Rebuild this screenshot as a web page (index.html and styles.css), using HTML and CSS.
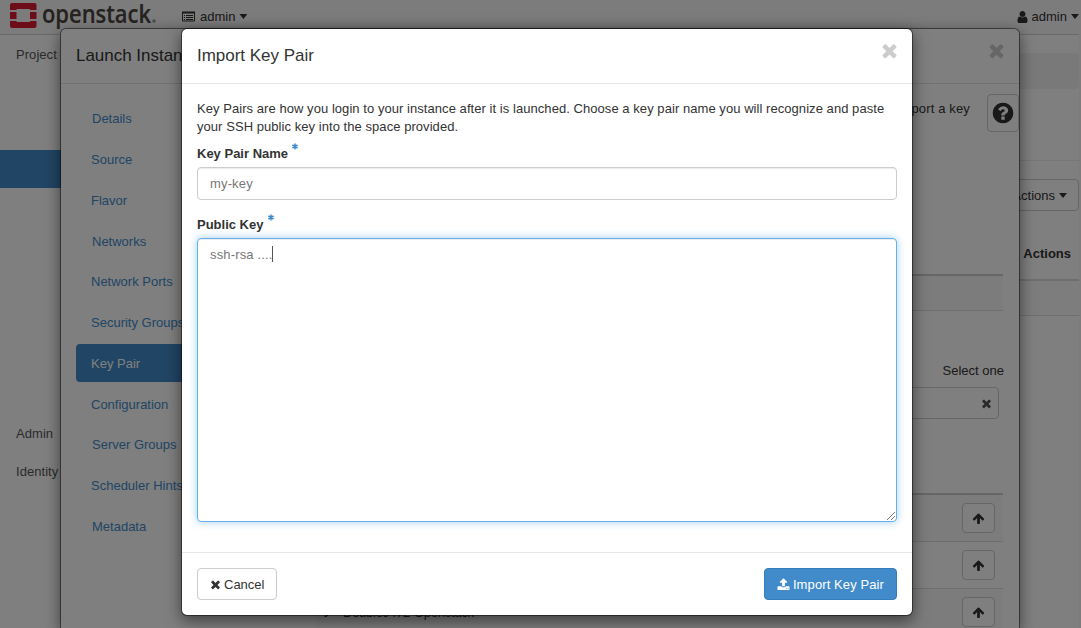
FILE: index.html
```html
<!DOCTYPE html>
<html lang="en">
<head>
<meta charset="utf-8">
<title>Import Key Pair</title>
<link rel="stylesheet" href="styles.css">
</head>
<body>
<svg class="defs" width="0" height="0">
  <symbol id="times" viewBox="0 0 1792 1792"><path d="M1490 1322q0 40-28 68l-136 136q-28 28-68 28t-68-28l-294-294-294 294q-28 28-68 28t-68-28l-136-136q-28-28-28-68t28-68l294-294-294-294q-28-28-28-68t28-68l136-136q28-28 68-28t68 28l294 294 294-294q28-28 68-28t68 28l136 136q28 28 28 68t-28 68l-294 294 294 294q28 28 28 68z"/></symbol>
  <symbol id="upload" viewBox="0 0 1792 1792"><path d="M1344 1472q0-26-19-45t-45-19-45 19-19 45 19 45 45 19 45-19 19-45zm256 0q0-26-19-45t-45-19-45 19-19 45 19 45 45 19 45-19 19-45zm128-224v320q0 40-28 68t-68 28h-1472q-40 0-68-28t-28-68v-320q0-40 28-68t68-28h427q21 56 70.500 92t110.500 36h256q61 0 110.500-36t70.500-92h427q40 0 68 28t28 68zm-325-648q-17 40-59 40h-256v448q0 26-19 45t-45 19h-256q-26 0-45-19t-19-45v-448h-256q-42 0-59-40-17-39 14-69l448-448q18-19 45-19t45 19l448 448q31 30 14 69z"/></symbol>
  <symbol id="user" viewBox="192 0 1408 1792"><path d="M1536 1399q0 109-62.500 187t-150.500 78h-854q-88 0-150.500-78t-62.500-187q0-85 8.500-160.500t31.500-152 58.500-131 94-89 134.500-34.500q131 128 313 128t313-128q76 0 134.500 34.500t94 89 58.500 131 31.500 152 8.500 160.500zm-256-887q0 159-112.500 271.500t-271.500 112.500-271.500-112.500-112.500-271.500 112.500-271.500 271.500-112.500 271.500 112.500 112.500 271.500z"/></symbol>
  <symbol id="help" viewBox="0 0 1792 1792"><path d="M1024 1376v-192q0-14-9-23t-23-9h-192q-14 0-23 9t-9 23v192q0 14 9 23t23 9h192q14 0 23-9t9-23zm256-672q0-88-55.500-163t-138.500-116-170-41q-243 0-371 213-15 24 8 42l132 100q7 6 19 6 16 0 25-12 53-68 86-92 34-24 86-24 48 0 85.500 26t37.500 59q0 38-20 61t-68 45q-63 28-115.500 86.500t-52.500 125.500v36q0 14 9 23t23 9h192q14 0 23-9t9-23q0-19 21.500-49.500t54.500-49.500q32-18 49-28.500t46-35 44.500-48 28-60.500 12.500-81zm384 192q0 209-103 385.500t-279.500 279.500-385.500 103-385.500-103-279.500-279.500-103-385.500 103-385.500 279.500-279.500 385.500-103 385.500 103 279.500 279.500 103 385.500z"/></symbol>
  <symbol id="up" viewBox="0 0 1792 1792"><path d="M1675 971q0 51-37 90l-75 75q-38 38-91 38-54 0-90-38l-294-293v704q0 52-37.500 84.500t-90.500 32.500h-128q-53 0-90.500-32.500t-37.500-84.500v-704l-294 293q-36 38-90 38t-90-38l-75-75q-38-38-38-90 0-53 38-91l651-651q35-37 90-37 54 0 91 37l651 651q37 39 37 91z"/></symbol>
  <symbol id="star" viewBox="0 0 6 6"><path d="M3 0v6M.4 1.500l5.200 3M5.600 1.500l-5.200 3" stroke="#428bca" stroke-width="1.500"/></symbol>
</svg>

<div class="page">
  <header class="topbar">
    <svg class="logo" width="150" height="34" viewBox="0 0 150 34">
      <g fill="#da1a32">
        <path d="M0 10V5q0-2 2-2h22.500q2 0 2 2v5h-6.500V9.500q0-.5-.5-.5H7q-.500 0-.500.500v.500z"/>
        <path d="M0 12h6.500v7H0zM20 12h6.500v7H20z"/>
        <path d="M0 21h6.500v.500q0 .500.500.500h12.500q.500 0 .500-.500V21h6.500v5q0 2-2 2H2q-2 0-2-2z"/>
      </g>
      <text class="wordmark" x="32" y="23" textLength="109" lengthAdjust="spacingAndGlyphs">openstack</text>
      <circle cx="144" cy="21" r="1.800" fill="#a09c9a"/>
    </svg>
    <div class="context">
      <svg width="13" height="11" viewBox="0 0 13 11"><path fill="none" stroke="#333" d="M.5 1.500h12v8.500H.5z"/><path stroke="#333" stroke-width="2" d="M0 1.500h13"/><path stroke="#333" d="M2 4.500h1M4 4.500h7M2 6.500h1M4 6.500h7M2 8.500h1M4 8.500h7"/></svg>
      <span>admin</span><i class="caret"></i>
    </div>
    <div class="account">
      <svg class="icon"><use href="#user"/></svg><span>admin</span><i class="caret"></i>
    </div>
  </header>
  <div class="columns">
    <nav class="sidebar">
      <a class="first">Project</a>
      <a class="active"></a>
      <a>Admin</a>
      <a>Identity</a>
    </nav>
    <main class="content">
      <div class="crumbs"></div>
      <hr class="rule">
      <div class="toolbar"><button class="btn">Actions<i class="caret"></i></button></div>
      <div class="thead">Actions</div>
      <div class="empty"></div>
    </main>
  </div>
</div>

<section class="modal launch">
  <header class="modal-head"><h2>Launch Instance</h2><svg class="close"><use href="#times"/></svg></header>
  <div class="launch-body">
    <nav class="steps">
      <a class="in">Details</a><a>Source</a><a>Flavor</a><a class="in">Networks</a><a>Network Ports</a><a>Security Groups</a><a class="active">Key Pair</a><a>Configuration</a><a class="in">Server Groups</a><a>Scheduler Hints</a><a class="in">Metadata</a>
    </nav>
    <div class="pane">
      <div class="intro"><p>import a key</p><button class="btn help"><svg><use href="#help"/></svg></button></div>
      <div class="allocated"></div>
      <p class="select">Select one</p>
      <div class="filter"><svg class="icon"><use href="#times"/></svg></div>
      <div class="rows">
        <div class="row odd"><button class="btn"><svg class="icon"><use href="#up"/></svg></button></div>
        <div class="row"><button class="btn"><svg class="icon"><use href="#up"/></svg></button></div>
        <div class="row odd"><svg class="chev" viewBox="0 0 8 10"><path d="M1 0l5 5-5 5" fill="none" stroke="#333" stroke-width="2"/></svg><span>DoubleJ472-Openstack</span><button class="btn"><svg class="icon"><use href="#up"/></svg></button></div>
      </div>
    </div>
  </div>
</section>

<div class="backdrop"></div>

<section class="modal import">
  <header class="modal-head"><h2>Import Key Pair</h2><svg class="close"><use href="#times"/></svg></header>
  <div class="import-body">
    <p class="lead">Key Pairs are how you login to your instance after it is launched. Choose a key pair name you will recognize and paste<br>your SSH public key into the space provided.</p>
    <div class="label"><span>Key Pair Name</span><svg class="star"><use href="#star"/></svg></div>
    <div class="field">my-key</div>
    <div class="label second"><span>Public Key</span><svg class="star"><use href="#star"/></svg></div>
    <div class="field area"><span>ssh-rsa ....</span><i class="cursor"></i>
      <svg class="grip" viewBox="0 0 8 8"><path d="M0 8L8 0M4 8l4-4" stroke="#555" stroke-width=".8" fill="none"/></svg>
    </div>
  </div>
  <footer class="modal-foot">
    <button class="btn"><svg class="icon"><use href="#times"/></svg><span>Cancel</span></button>
    <button class="btn primary"><svg class="icon"><use href="#upload"/></svg><span>Import Key Pair</span></button>
  </footer>
</section>
</body>
</html>
```
FILE: styles.css
```css
* { box-sizing: border-box; }
body { margin: 0; height: 628px; overflow: hidden; position: relative; background: #fff; color: #333; font: 13px/18px "Liberation Sans", Arial, sans-serif; }
p, h2 { margin: 0; }
svg { display: block; flex: none; }
.defs { position: absolute; }
.icon { width: 13px; height: 13px; fill: currentColor; }
.caret { width: 8px; height: 5px; background: currentColor; clip-path: polygon(0 0, 100% 0, 50% 100%); margin-left: 4px; }
.btn { display: flex; align-items: center; justify-content: center; font: inherit; color: #333; background: #fff; border: 1px solid #ccc; border-radius: 4px; height: 32px; padding: 0 12px; }

/* dashboard */
.page { height: 628px; padding-right: 2px; background: linear-gradient(to left, #f8f8f8 2px, #fff 2px); }
.topbar { height: 35px; display: flex; padding: 0 0 0 10px; background: #f8f8f8; border-bottom: 1px solid #d2d2d2; }
.wordmark { font: 600 25.500px "Open Sans", sans-serif; fill: #4b4440; stroke: #4b4440; stroke-width: .2px; }
.context { display: flex; align-items: center; margin-left: 22px; height: 33px; }
.context span { margin-left: 5px; }
.account { display: flex; align-items: center; margin-left: auto; height: 33px; }
.account .icon { width: 11px; height: 14px; }
.account span { margin-left: 4px; }
.columns { display: flex; }
.sidebar { width: 240px; display: flex; flex-direction: column; }
.sidebar a { height: 38px; padding: 10px 16px; color: #555; letter-spacing: .05px; }
.sidebar .first { padding-top: 11px; }
.sidebar .active { margin: 77px 0 227px; background: #428bca; }
.content { flex: 1; padding-top: 18px; }
.crumbs { height: 36px; background: #f3f3f3; border-radius: 4px; }
.rule { margin: 71px 0 18px; border: 0; border-top: 1px solid #eee; }
.toolbar { display: flex; justify-content: flex-end; }
.toolbar .btn { padding: 1px 11px 0 12px; }
.thead { height: 70px; padding: 34px 8px 0; border-bottom: 2px solid #ddd; font-weight: bold; text-align: right; }
.empty { height: 35px; border-bottom: 1px solid #ddd; background: #fafafa; }

/* dialogs */
.modal { position: absolute; top: 28px; background: #fff; border: 1px solid rgba(0,0,0,.45); border-radius: 6px; box-shadow: 0 5px 15px rgba(0,0,0,.5); background-clip: padding-box; }
.modal-head { height: 55px; display: flex; justify-content: space-between; padding: 17px 15px 0; border-bottom: 1px solid #e5e5e5; }
.modal-head h2 { font-size: 17px; line-height: 20px; font-weight: 400; letter-spacing: -.02px; }
.close { width: 21px; height: 21px; margin: -6px -3px 0 0; fill: #ccc; }

.launch { left: 60px; width: 960px; height: 600px; border-bottom: 0; border-radius: 6px 6px 0 0; overflow: hidden; }
.launch-body { display: flex; padding-top: 15px; }
.steps { width: 225px; padding: .4px 0 0 15px; display: flex; flex-direction: column; gap: 2.750px; }
.steps a { height: 38px; padding: 11px 15px 9px; color: #428bca; border-radius: 4px; }
.steps .in { padding-left: 16px; }
.steps .active { background: #428bca; color: #fff; }
.pane { flex: 1; padding: 0 15px 0 30px; display: flex; flex-direction: column; }
.intro { display: flex; justify-content: flex-end; margin: -5px -15px 0 0; height: 38px; }
.intro p { margin: 6px 17px 0 0; letter-spacing: .15px; }
.btn.help { width: 32px; height: 38px; padding: 0; }
.help svg { width: 24px; height: 24px; fill: #333; }
.allocated { margin: 142px 1px 0 0; height: 37px; border-top: 2px solid #ccc; border-bottom: 1px solid #ddd; background: #f9f9f9; }
.select { margin-top: 51px; text-align: right; }
.filter { margin: 7px 5px 0 0; height: 32px; border: 1px solid #ccc; border-radius: 4px; display: flex; align-items: center; justify-content: flex-end; padding-right: 5px; color: #555; }
.rows { margin: 74px 1px 0 0; border-top: 2px solid #ccc; }
.row { height: 47px; border-bottom: 1px solid #ddd; display: flex; align-items: center; padding: 0 8px; }
.odd { background: #f9f9f9; }
.row .btn { width: 33px; height: 30px; padding: 0; margin-left: auto; }
.chev { width: 8px; height: 10px; }
.row span { margin: 1px 0 0 11px; letter-spacing: -.25px; }

.backdrop { position: absolute; inset: 0; background: rgba(0,0,0,.5); }

.import { left: 181px; width: 732px; height: 588px; display: flex; flex-direction: column; }
.import-body { flex: 1; padding: 15px 15px 0; }
.lead { letter-spacing: .055px; height: 45px; margin-top: 1px; }
.label { display: flex; font-weight: bold; height: 22px; }
.label.second { margin-top: 16px; }
.star { width: 6px; height: 7px; margin: -2px 0 0 4px; }
.second .star { margin-left: 5px; }
.field { height: 33px; padding: 7px 12px; border: 1px solid #ccc; border-radius: 4px; color: #777; box-shadow: inset 0 1px 1px rgba(0,0,0,.075); letter-spacing: .15px; }
.area { position: relative; display: flex; height: 284px; border-color: #66afe9; box-shadow: inset 0 1px 1px rgba(0,0,0,.075), 0 0 8px rgba(102,175,233,.6); }
.cursor { width: 1px; height: 16px; background: #555; }
.grip { position: absolute; right: 1px; bottom: 1px; width: 8px; height: 8px; }
.modal-foot { height: 63px; padding: 15px 15px 0; border-top: 1px solid #e5e5e5; display: flex; justify-content: space-between; }
.modal-foot .btn { padding: 1px 12px 0 11px; }
.modal-foot .icon { margin-bottom: 1px; }
.modal-foot .btn span { margin-left: 2px; }
.modal-foot .btn.primary { background: #428bca; border-color: #357ebd; color: #fff; padding: 1px 12px 0; }
.modal-foot .primary span { margin-left: 3px; letter-spacing: .1px; }
```
